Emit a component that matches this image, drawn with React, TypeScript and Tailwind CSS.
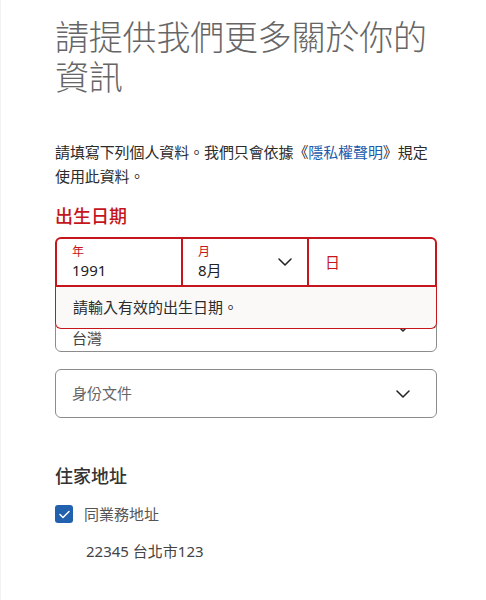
import React from "react";

const Chevron = () => (
  <svg width="14" height="8" viewBox="0 0 14 8" fill="none">
    <path d="M1 1l6 6 6-6" stroke="#222" strokeWidth="1.5" strokeLinecap="round" strokeLinejoin="round" />
  </svg>
);

export default function App() {
  const font = { fontFamily: '"Noto Sans", "Noto Sans CJK TC", sans-serif' };
  return (
    <div className="min-h-[600px] w-[486px] bg-white border-l border-[#f2f2f2]" style={font}>
      <div className="pl-[54px] w-[436px] pt-[17px]">
        <h1 className="text-[34px] leading-[40px] font-extralight text-[#666666] tracking-[-0.2px]">
          請提供我們更多關於你的
          <br />
          資訊
        </h1>
        <p className="mt-[43px] text-[15px] leading-[24px] text-[#2b2b2b] tracking-[-0.1px]">
          請填寫下列個人資料。我們只會依據《<span className="text-[#1b5cab]">隱私權聲明</span>》規定使用此資料。
        </p>
        <h2 className="mt-[16px] text-[18px] leading-[24px] font-medium text-[#c4161c]">出生日期</h2>

        <div className="relative mt-[9px]">
          <div className="grid grid-cols-3 h-[50px] border-2 border-[#c4161c] rounded-t-[6px] bg-white">
            <div className="flex flex-col justify-center pl-[15px] border-r-2 border-[#c4161c]">
              <span className="text-[12px] leading-[16px] text-[#c4161c]">年</span>
              <span className="text-[15px] leading-[20px] text-[#222]">1991</span>
            </div>
            <div className="flex items-center justify-between pl-[15px] pr-[15px] border-r-2 border-[#c4161c]">
              <div className="flex flex-col">
                <span className="text-[12px] leading-[16px] text-[#c4161c]">月</span>
                <span className="text-[15px] leading-[20px] text-[#222]">8月</span>
              </div>
              <Chevron />
            </div>
            <div className="flex items-center pl-[16px]">
              <span className="text-[15px] text-[#c4161c]">日</span>
            </div>
          </div>
          <div className="absolute left-0 right-0 top-full z-10 h-[42px] flex items-center pl-[17px] bg-[#faf9f8] border border-t-0 border-[#c4161c] rounded-b-[6px] text-[15px] text-[#2b2b2b]">
            請輸入有效的出生日期。
          </div>
        </div>

        <div className="mt-[16px] h-[49px] border border-[#8c8c8c] rounded-[6px] flex items-center justify-between pl-[16px] pr-[26px]">
          <span className="self-end pb-[3px] text-[15px] leading-[20px] text-[#444]">台灣</span>
          <Chevron />
        </div>

        <div className="mt-[17px] h-[49px] border border-[#8c8c8c] rounded-[6px] flex items-center justify-between pl-[16px] pr-[26px]">
          <span className="text-[15px] text-[#666]">身份文件</span>
          <Chevron />
        </div>

        <h2 className="mt-[46px] text-[18px] leading-[24px] font-medium text-[#333]">住家地址</h2>

        <div className="mt-[15px] flex items-center">
          <div className="w-[18px] h-[18px] rounded-[3px] bg-[#2161ad] flex items-center justify-center">
            <svg width="11" height="9" viewBox="0 0 11 9" fill="none">
              <path d="M1 4.5l3 3L10 1.5" stroke="white" strokeWidth="1.5" strokeLinecap="round" strokeLinejoin="round" />
            </svg>
          </div>
          <span className="ml-[11px] text-[15px] text-[#555]">同業務地址</span>
        </div>

        <div className="mt-[14px] pl-[31px] text-[15px] text-[#444]">22345 台北市123</div>
      </div>
    </div>
  );
}
